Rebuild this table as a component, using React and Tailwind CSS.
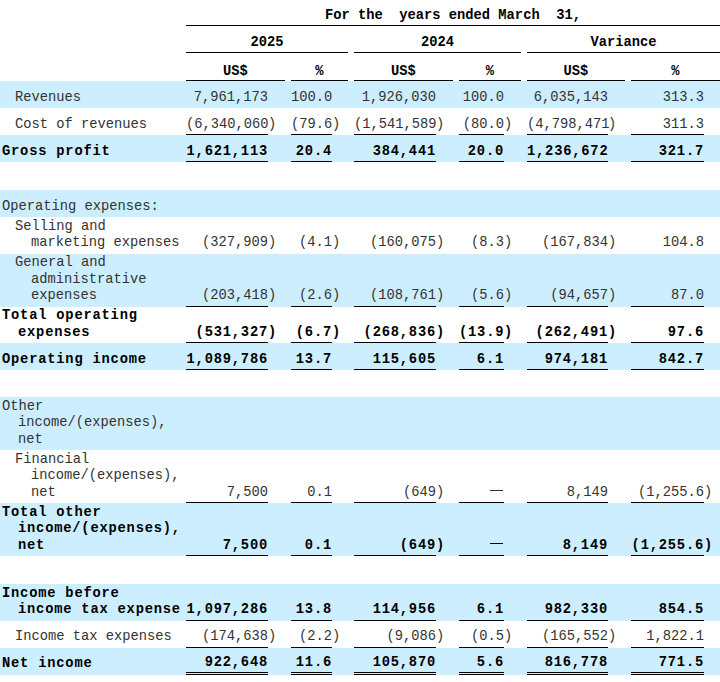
const COLS = "grid grid-cols-[186px_105px_63px_105px_68px_104px_89px]";
const BOX = ["w-[82px]", "w-[41px]", "w-[82px]", "w-[45px]", "w-[81px]", "w-[73px]"];

const rows = [
  { label: ["Revenues"], lvl: 1, blue: true, vals: ["7,961,173", "100.0", "1,926,030", "100.0", "6,035,143", "313.3"] },
  { label: ["Cost of revenues"], lvl: 1, line: "single", vals: ["(6,340,060)", "(79.6)", "(1,541,589)", "(80.0)", "(4,798,471)", "311.3"] },
  { label: ["Gross profit"], bold: true, blue: true, line: "single", vals: ["1,621,113", "20.4", "384,441", "20.0", "1,236,672", "321.7"] },
  { empty: true, h: "h-[28px]" },
  { label: ["Operating expenses:"], blue: true },
  { label: ["Selling and", "marketing expenses"], lvl: 1, vals: ["(327,909)", "(4.1)", "(160,075)", "(8.3)", "(167,834)", "104.8"] },
  { label: ["General and", "administrative", "expenses"], lvl: 1, blue: true, line: "single", vals: ["(203,418)", "(2.6)", "(108,761)", "(5.6)", "(94,657)", "87.0"] },
  { label: ["Total operating", "expenses"], bold: true, line: "single", vals: ["(531,327)", "(6.7)", "(268,836)", "(13.9)", "(262,491)", "97.6"] },
  { label: ["Operating income"], bold: true, blue: true, line: "single", vals: ["1,089,786", "13.7", "115,605", "6.1", "974,181", "842.7"] },
  { empty: true, h: "h-[27px]" },
  { label: ["Other", "income/(expenses),", "net"], blue: true },
  { label: ["Financial", "income/(expenses),", "net"], lvl: 1, line: "single", vals: ["7,500", "0.1", "(649)", "—", "8,149", "(1,255.6)"] },
  { label: ["Total other", "income/(expenses),", "net"], bold: true, blue: true, line: "single", vals: ["7,500", "0.1", "(649)", "—", "8,149", "(1,255.6)"] },
  { empty: true, h: "h-[28px]" },
  { label: ["Income before", "income tax expense"], bold: true, blue: true, line: "single", vals: ["1,097,286", "13.8", "114,956", "6.1", "982,330", "854.5"] },
  { label: ["Income tax expenses"], lvl: 1, line: "single", vals: ["(174,638)", "(2.2)", "(9,086)", "(0.5)", "(165,552)", "1,822.1"] },
  { label: ["Net income"], bold: true, blue: true, line: "double", vals: ["922,648", "11.6", "105,870", "5.6", "816,778", "771.5"] },
];

function Num({ value, idx, line }) {
  const neg = value.endsWith(")");
  const main = neg ? value.slice(0, -1) : value;
  let border = "border-b border-transparent pb-[1px]";
  if (line === "single") border = "border-b border-black pb-[1px]";
  if (line === "double") border = "border-b-[3px] border-double border-black";
  return (
    <div className="flex items-end">
      <div className={`${BOX[idx]} ${border} text-right whitespace-nowrap`}>
        {main === "—" ? <span className="inline-block w-[13px] h-[1px] mb-[5px] mr-[1px] bg-current" /> : main}
      </div>
      <div className="w-[8px] pb-[2px] whitespace-nowrap">{neg ? ")" : ""}</div>
    </div>
  );
}

function Row({ row }) {
  if (row.empty) return <div className={row.h} />;
  const { label, lvl, bold, blue, vals, line } = row;
  return (
    <div
      className={`${COLS} items-end min-h-[27px] pt-[1.5px] ${blue ? "bg-[#cceeff]" : ""} ${
        bold ? "font-bold tracking-[0.8px] text-black" : "text-[#333]"
      }`}
    >
      <div className={`pb-[2px] whitespace-nowrap ${lvl ? "pl-[15px]" : "pl-[2px]"}`}>
        {label.map((t, i) => (
          <div key={i} className={i > 0 ? "pl-[16px]" : ""}>
            {t}
          </div>
        ))}
      </div>
      {vals && vals.map((v, i) => <Num key={i} value={v} idx={i} line={line} />)}
    </div>
  );
}

export default function App() {
  return (
    <div className="w-[720px] h-[682px] bg-white overflow-hidden font-['Liberation_Mono',monospace] text-[13.75px] leading-[16.5px] text-[#333]">
      {/* Header */}
      <div className={`${COLS} h-[26px] items-end font-bold text-black`}>
        <div />
        <div className="col-span-6 border-b border-black pb-[1px] text-center whitespace-pre">
          For the  years ended March  31,
        </div>
      </div>
      <div className={`${COLS} h-[27px] items-end font-bold text-black`}>
        <div />
        <div className="col-span-2 mr-[6px] border-b border-black pb-[1px] text-center">2025</div>
        <div className="col-span-2 mr-[6px] border-b border-black pb-[1px] text-center">2024</div>
        <div className="col-span-2 border-b border-black pb-[1px] text-center">Variance</div>
      </div>
      <div className={`${COLS} h-[28px] items-end font-bold text-black`}>
        <div />
        <div className="mr-[6px] border-b border-black text-center">US$</div>
        <div className="mr-[6px] border-b border-black text-center">%</div>
        <div className="mr-[6px] border-b border-black text-center">US$</div>
        <div className="mr-[6px] border-b border-black text-center">%</div>
        <div className="mr-[6px] border-b border-black text-center">US$</div>
        <div className="border-b border-black text-center">%</div>
      </div>

      {rows.map((r, i) => (
        <Row key={i} row={r} />
      ))}
    </div>
  );
}
